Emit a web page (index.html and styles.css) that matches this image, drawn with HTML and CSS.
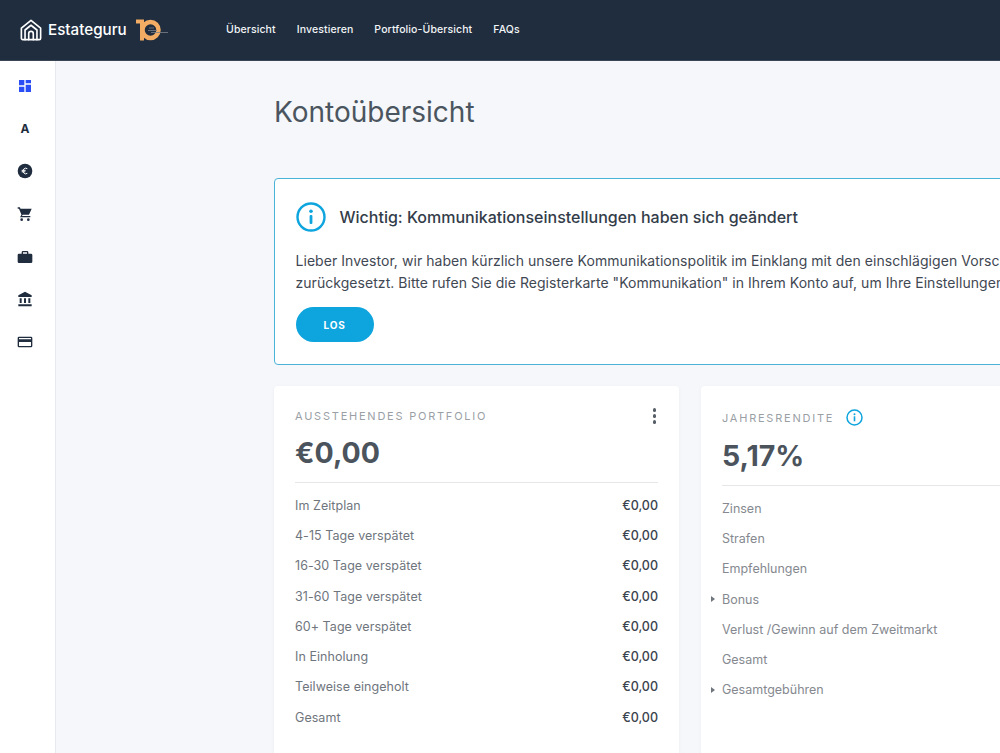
FILE: index.html
```html
<!DOCTYPE html>
<html lang="de">
<head>
<meta charset="utf-8">
<title>Kontoübersicht</title>
<link rel="stylesheet" href="styles.css">
</head>
<body>
<header class="topbar">
  <div class="brand">
    <svg class="brand-mark" width="22" height="22" viewBox="0 0 24 24" fill="none" stroke="#fff" stroke-width="1.800" stroke-linejoin="round" stroke-linecap="round"><path d="M1.500 10 12 1.500 22.500 10v11a1.500 1.500 0 0 1-1.500 1.500H3A1.500 1.500 0 0 1 1.500 21z"/><path d="M5.500 22.500V12L12 6.800 18.500 12v10.500"/><path d="M9.500 22.500V16a2.500 2.500 0 0 1 5 0v6.500"/></svg>
    <span class="brand-name">Estateguru</span>
    <svg class="brand-ten" width="34" height="24" viewBox="0 0 34 24"><path d="M1 1.500h8v21H5V5.500H1z" fill="#f2ac63"/><circle cx="15.500" cy="12" r="8" fill="none" stroke="#f2ac63" stroke-width="4.500"/><path d="M14 10h5M13 12.500h9M16 14.500h17" stroke="#7d8288" stroke-width="0.800"/></svg>
  </div>
  <nav class="nav">
    <a>Übersicht</a>
    <a>Investieren</a>
    <a>Portfolio-Übersicht</a>
    <a>FAQs</a>
  </nav>
</header>
<div class="shell">
  <aside class="sidebar">
    <svg class="side-icon" viewBox="0 0 24 24" fill="#2a4df5"><path d="M3 3h8v8H3zM13 3h8v5h-8zM3 13h8v8H3zM13 10h8v11h-8z"/></svg>
    <span class="side-letter">A</span>
    <svg class="side-icon" viewBox="0 0 24 24"><circle cx="12" cy="12" r="11" fill="#1f2d3f"/><path d="M15.500 8.500a4.200 4.200 0 1 0 0 7M7 11h6M7 13.200h5.500" fill="none" stroke="#fff" stroke-width="1.500"/></svg>
    <svg class="side-icon" viewBox="0 0 24 24" fill="#1f2d3f"><path d="M1 2h3.300l1 2H22l-4 9H8.500l-1 2H20v2H4.500l2.200-4L3 4H1z"/><circle cx="7" cy="20.500" r="2"/><circle cx="17" cy="20.500" r="2"/></svg>
    <svg class="side-icon" viewBox="0 0 24 24" fill="#1f2d3f"><path d="M9 3h6a2 2 0 0 1 2 2v2h4a2 2 0 0 1 2 2v10a2 2 0 0 1-2 2H3a2 2 0 0 1-2-2V9a2 2 0 0 1 2-2h4V5a2 2 0 0 1 2-2zm0 4h6V5H9z"/></svg>
    <svg class="side-icon" viewBox="0 0 24 24" fill="#1f2d3f"><path d="M12 1 2 6.500V9h20V6.500zM4 11h3v7H4zM10.500 11h3v7h-3zM17 11h3v7h-3zM2 20h20v3H2z"/></svg>
    <svg class="side-icon" viewBox="0 0 24 24" fill="#1f2d3f"><path d="M3 4h18a2 2 0 0 1 2 2v12a2 2 0 0 1-2 2H3a2 2 0 0 1-2-2V6a2 2 0 0 1 2-2zm0 2v2h18V6zm0 6v6h18v-6z"/></svg>
  </aside>
  <main class="main">
    <h1 class="title">Kontoübersicht</h1>
    <section class="notice">
      <div class="notice-head">
        <svg class="notice-icon" width="30" height="30" viewBox="0 0 30 30" fill="none"><circle cx="15" cy="15" r="13.500" stroke="#0ea5de" stroke-width="2.400"/><rect x="13.600" y="13" width="2.800" height="9" rx="1" fill="#0ea5de"/><circle cx="15" cy="9.300" r="1.800" fill="#0ea5de"/></svg>
        <h2 class="notice-title">Wichtig: Kommunikationseinstellungen haben sich geändert</h2>
      </div>
      <p class="notice-text">Lieber Investor, wir haben kürzlich unsere Kommunikationspolitik im Einklang mit den einschlägigen Vorschriften aktualisiert und Ihre Einstellungen<br>zurückgesetzt. Bitte rufen Sie die Registerkarte "Kommunikation" in Ihrem Konto auf, um Ihre Einstellungen zu überprüfen.</p>
      <button class="btn">LOS</button>
    </section>
    <div class="cards">
      <section class="card">
        <div class="card-head">
          <span class="card-label">AUSSTEHENDES PORTFOLIO</span>
          <span class="kebab"><i></i><i></i><i></i></span>
        </div>
        <div class="card-value">€0,00</div>
        <ul class="rows">
          <li><span>Im Zeitplan</span><b>€0,00</b></li>
          <li><span>4-15 Tage verspätet</span><b>€0,00</b></li>
          <li><span>16-30 Tage verspätet</span><b>€0,00</b></li>
          <li><span>31-60 Tage verspätet</span><b>€0,00</b></li>
          <li><span>60+ Tage verspätet</span><b>€0,00</b></li>
          <li><span>In Einholung</span><b>€0,00</b></li>
          <li><span>Teilweise eingeholt</span><b>€0,00</b></li>
          <li><span>Gesamt</span><b>€0,00</b></li>
        </ul>
      </section>
      <section class="card">
        <div class="card-head card-head-tall">
          <span class="card-label">JAHRESRENDITE</span>
          <svg class="label-info" width="17" height="17" viewBox="0 0 17 17" fill="none"><circle cx="8.500" cy="8.500" r="7.500" stroke="#0ea5de" stroke-width="1.500"/><rect x="7.700" y="7.300" width="1.600" height="5" fill="#0ea5de"/><circle cx="8.500" cy="5.200" r="1" fill="#0ea5de"/></svg>
        </div>
        <div class="card-value">5,17%</div>
        <ul class="rows rows-muted">
          <li><span>Zinsen</span></li>
          <li><span>Strafen</span></li>
          <li><span>Empfehlungen</span></li>
          <li class="has-caret"><span>Bonus</span></li>
          <li><span>Verlust /Gewinn auf dem Zweitmarkt</span></li>
          <li><span>Gesamt</span></li>
          <li class="has-caret"><span>Gesamtgebühren</span></li>
        </ul>
      </section>
    </div>
  </main>
</div>
</body>
</html>
```

FILE: styles.css
```css
* { box-sizing: border-box; }
html, body { margin: 0; height: 100%; overflow: hidden; }
body { font-family: Inter, "Liberation Sans", sans-serif; background: #f5f7fa; color: #1f2d3f; width: 1000px; height: 753px; }

.topbar { height: 61px; background: #1f2d3f; display: flex; align-items: center; border-bottom: 1px solid #3a4655; padding-bottom: 1px; }
.brand { display: flex; align-items: center; padding-left: 20px; width: 226px; flex: none; }
.brand-mark { flex: none; }
.brand-name { color: #fff; font-size: 15.200px; font-weight: 500; margin-left: 6px; }
.brand-ten { margin-left: 8px; flex: none; }
.nav { display: flex; gap: 21px; }
.nav a { color: #f2f4f6; font-size: 10.500px; font-weight: 500; letter-spacing: 0.110px; }

.shell { display: flex; height: 692px; }
.sidebar { width: 56px; flex: none; background: #fff; border-right: 1px solid #e6e9ee; display: flex; flex-direction: column; align-items: center; padding: 17px 5px 0 0; gap: 26.700px; }
.side-icon { width: 16px; height: 16px; display: block; flex: none; }
.side-letter { height: 16px; line-height: 16px; font-size: 12px; font-weight: 700; }

.main { flex: 1; padding: 35px 0 0 218px; min-width: 0; overflow: hidden; }
.title { margin: 0 0 48px; font-size: 28px; line-height: 32px; font-weight: 400; color: #4b5560; height: 34px; }

.notice { width: 900px; height: 187px; background: #fff; border: 1px solid #4cb3d8; border-radius: 4px; padding: 23px 21px 0 20.500px; }
.notice-head { display: flex; align-items: center; gap: 14px; }
.notice-icon { flex: none; }
.notice-title { margin: 0; font-size: 16px; font-weight: 500; color: #333d49; }
.notice-text { margin: 18px 0 13px; font-size: 14px; line-height: 22px; color: #3f4853; white-space: nowrap; letter-spacing: 0.050px; }
.btn { display: block; width: 78px; height: 35px; border: 0; border-radius: 18px; background: #0ea5de; color: #fff; font: 700 10px Inter, sans-serif; letter-spacing: 0.800px; }

.cards { display: flex; gap: 22px; margin-top: 21px; }
.card { width: 405px; flex: none; background: #fff; border-radius: 4px; height: 400px; padding: 20px 21px 0; box-shadow: 0 1px 4px rgba(30, 45, 63, 0.04); }
.card-head { display: flex; justify-content: space-between; align-items: center; height: 20px; }
.card-head-tall { justify-content: flex-start; gap: 12px; height: 23px; }
.card-label { font-size: 11px; letter-spacing: 1.770px; color: #9a9fa6; }
.kebab { display: flex; flex-direction: column; gap: 2.500px; padding-right: 2px; }
.kebab i { width: 3.500px; height: 3.500px; border-radius: 50%; background: #555c65; display: block; }
.card-value { font-size: 28.500px; font-weight: 700; line-height: 36px; margin-top: 9px; padding-bottom: 11px; border-bottom: 1px solid #e4e6e9; color: #4b535c; }
.rows { list-style: none; margin: 7px 0 0; padding: 0; }
.rows li { display: flex; justify-content: space-between; height: 30.300px; align-items: center; font-size: 12.500px; letter-spacing: 0.050px; color: #6f757d; position: relative; }
.rows b { font-weight: 500; color: #3a434e; letter-spacing: 0; }
.rows-muted li { color: #85898f; letter-spacing: 0; }
.has-caret::before { content: ""; position: absolute; left: -11px; top: 12px; border-left: 4px solid #6f757d; border-top: 3px solid transparent; border-bottom: 3px solid transparent; }
```
